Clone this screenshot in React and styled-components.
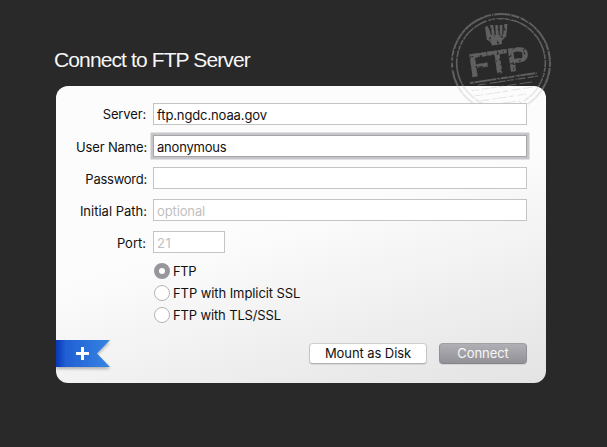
import React, { useState } from "react";
import styled, { createGlobalStyle } from "styled-components";

const GlobalStyle = createGlobalStyle`
  * { box-sizing: border-box; }
  body { margin: 0; background: #292929; }
`;

const Window = styled.main`
  width: 607px;
  height: 447px;
  overflow: hidden;
  padding: 46px 61px 0 56px;
  background: #292929;
  font-family: Inter, sans-serif;
  font-size: 13px;
  color: #111;
`;

const Title = styled.h1`
  margin: 0 0 12px -2px;
  height: 28px;
  font: 400 21px/28px "Liberation Sans", Arial, sans-serif;
  letter-spacing: -0.88px;
  white-space: nowrap;
  color: #f7f7f7;
`;

const Panel = styled.form`
  position: relative;
  display: flex;
  flex-direction: column;
  width: 490px;
  height: 297px;
  padding-top: 17px;
  border-radius: 12px;
  background: linear-gradient(164deg, #fcfcfc 0%, #fcfcfc 46%, #e3e3e3 100%);
`;

const Stamp = styled.svg`
  position: absolute;
  left: 390px;
  top: -77px;
  width: 112px;
  height: 110px;
  overflow: visible;
  pointer-events: none;
`;

const Fields = styled.div`
  position: relative;
  display: grid;
  gap: 10px;
`;

const Row = styled.label`
  display: grid;
  grid-template-columns: 91px auto;
  column-gap: 6px;
  height: 22px;
`;

const Label = styled.span`
  text-align: right;
  line-height: ${(p) => p.$lineHeight || 25}px;
  letter-spacing: ${(p) => p.$spacing || "-0.15px"};
  white-space: nowrap;
  padding-right: ${(p) => p.$inset || 0}px;
`;

const Input = styled.input`
  width: ${(p) => (p.$short ? 72 : 374)}px;
  height: 22px;
  padding: 2px 3px 0;
  border: 1px solid ${(p) => (p.$active ? "#a5a5a8" : "#c4c4c4")};
  border-radius: 0;
  outline: none;
  background: #fff;
  color: #111;
  font: 13px Inter, sans-serif;
  letter-spacing: ${(p) => p.$spacing || "-0.12px"};
  box-shadow: ${(p) => (p.$active ? "0 0 0 2.5px #c6c6ca" : "none")};
  &::placeholder { color: #bfbfbf; opacity: 1; }
`;

const Protocols = styled.div`
  display: grid;
  gap: 6px;
  margin: 10px 0 0 98px;
`;

const Choice = styled.label`
  display: flex;
  align-items: center;
  gap: 3px;
  height: 16px;
  line-height: 16px;
  white-space: nowrap;
  letter-spacing: ${(p) => p.$spacing};
`;

const Radio = styled.input`
  appearance: none;
  width: 16px;
  height: 16px;
  margin: 0;
  border: 1px solid #b5b5b5;
  border-radius: 50%;
  background: #fff;
  &:checked {
    border: 5px solid #97969c;
  }
`;

const Footer = styled.footer`
  display: flex;
  align-items: flex-start;
  margin-top: 17px;
`;

const AddButton = styled.button`
  width: 54px;
  height: 27px;
  margin-right: 199px;
  padding: 0;
  border: 0;
  background: none;
  svg { display: block; overflow: visible; }
`;

const Button = styled.button`
  width: ${(p) => p.$width}px;
  height: 21px;
  margin: 3px 12px 0 0;
  padding: 0 0 1px;
  border: 1px solid;
  border-color: ${(p) => (p.$primary ? "#a09fa4 #929196 #858489" : "#cecece #c5c5c5 #b2b2b2")};
  border-radius: 4px;
  background: ${(p) => (p.$primary ? "linear-gradient(#b0afb5, #929197)" : "#fff")};
  color: ${(p) => (p.$primary ? "#f7f7f7" : "#111")};
  font: 13px/18px Inter, sans-serif;
  letter-spacing: -0.08px;
  white-space: nowrap;
  box-shadow: 0 1px 1px rgba(0, 0, 0, 0.09);
`;

function StampArt() {
  return (
    <>
      <g fill="none" stroke="currentColor">
        <circle cx="55" cy="54" r="49" strokeWidth="2" strokeDasharray="34 1 16 1 44 2 5 2 3 1 60 1 28 1 9 1" transform="rotate(60 55 54)" />
        <circle cx="55" cy="54" r="44.3" strokeWidth="1.6" strokeDasharray="28 1 12 1 5 1 30 2 7 1 41 1" transform="rotate(150 55 54)" />
        <path d="M24 74 91 64" strokeWidth="1.8" strokeDasharray="30 1 14 1 20 1" />
        <path d="M32 76 92 67" strokeWidth="1.1" strokeDasharray="10 2 16 1 7 2" />
        <path d="M24 82 86 73M28 87l59-9M34 92l46-7M43 96l31-4" strokeWidth="1.1" strokeDasharray="9 3 15 2 5 4" />
      </g>
      <text
        transform="translate(24.5 68.2) rotate(-8)"
        fontFamily="Liberation Sans, Arial, sans-serif"
        fontSize="33"
        fontWeight="700"
        textLength="61"
        fill="currentColor"
        stroke="currentColor"
        strokeWidth="0.4"
      >
        FTP
      </text>
      <path
        fill="currentColor"
        d="M39 18l3-1 3 9h1l-1.9-10h3l1.8 10h1l-.7-10h2.8l.6 10h1l.1-10h2.8l-.3 10h1l1.2-11h3l-1 12-4.6 4.8.2 3.2-10 1.6-1.5-3.6-3.7-2.2z"
      />
    </>
  );
}

const FIELDS = [
  { label: "Server:", value: "ftp.ngdc.noaa.gov", inset: 1, lineHeight: 23 },
  { label: "User Name:", value: "anonymous", active: true, valueSpacing: "-0.2px" },
  { label: "Password:", value: "", spacing: "-0.25px" },
  { label: "Initial Path:", value: "", placeholder: "optional", spacing: "0px" },
  { label: "Port:", value: "", placeholder: "21", short: true, inset: 1, spacing: "0px", valueSpacing: "0.5px" },
];

const PROTOCOLS = [
  { label: "FTP", spacing: "-0.35px" },
  { label: "FTP with Implicit SSL", spacing: "-0.08px" },
  { label: "FTP with TLS/SSL", spacing: "-0.14px" },
];

export default function App() {
  const [protocol, setProtocol] = useState("FTP");
  return (
    <Window>
      <GlobalStyle />
      <Title>Connect to FTP Server</Title>
      <Panel onSubmit={(e) => e.preventDefault()}>
        <Stamp viewBox="0 0 112 110" aria-hidden="true">
          <defs>
            <clipPath id="aboveCard"><path d="M0 0h112v110h-12V89a12 12 0 0 0-12-12H0z" /></clipPath>
            <clipPath id="onCard"><path d="M0 77h88a12 12 0 0 1 12 12v21H0z" /></clipPath>
            <filter id="wear" x="-5%" y="-5%" width="110%" height="110%">
              <feTurbulence type="fractalNoise" baseFrequency="0.3" numOctaves="2" seed="8" result="grain" />
              <feColorMatrix in="grain" values="0 0 0 0 0  0 0 0 0 0  0 0 0 0 0  0 0 0 6 -1.35" result="mask" />
              <feComposite in="SourceGraphic" in2="mask" operator="in" />
            </filter>
          </defs>
          <g clipPath="url(#aboveCard)" color="#606060"><g filter="url(#wear)"><StampArt /></g></g>
          <g clipPath="url(#onCard)" color="#e6e6e6"><g filter="url(#wear)"><StampArt /></g></g>
        </Stamp>
        <Fields>
          {FIELDS.map((f) => (
            <Row key={f.label}>
              <Label $inset={f.inset} $lineHeight={f.lineHeight} $spacing={f.spacing}>{f.label}</Label>
              <Input
                defaultValue={f.value}
                placeholder={f.placeholder}
                $active={f.active}
                $short={f.short}
                $spacing={f.valueSpacing}
              />
            </Row>
          ))}
        </Fields>
        <Protocols>
          {PROTOCOLS.map((p) => (
            <Choice key={p.label} $spacing={p.spacing}>
              <Radio type="radio" name="protocol" checked={protocol === p.label} onChange={() => setProtocol(p.label)} />
              {p.label}
            </Choice>
          ))}
        </Protocols>
        <Footer>
          <AddButton type="button" aria-label="Add">
            <svg width="54" height="27" viewBox="0 0 54 27">
              <defs>
                <linearGradient id="ribbon" x2="1" y2="0">
                  <stop offset="0" stopColor="#0736b4" />
                  <stop offset="0.18" stopColor="#215fd4" />
                  <stop offset="1" stopColor="#3684e2" />
                </linearGradient>
                <filter id="ribbonShadow" x="-5%" y="-10%" width="115%" height="145%">
                  <feDropShadow dx="0" dy="2" stdDeviation="1.5" floodOpacity="0.28" />
                </filter>
                <clipPath id="ribbonEdge"><path d="M0 0h64v36H0z" /></clipPath>
              </defs>
              <g clipPath="url(#ribbonEdge)">
                <path d="M0 0h54L41 13.5 54 27H0z" fill="url(#ribbon)" filter="url(#ribbonShadow)" />
              </g>
              <path d="M20 13.5h13M26.5 7v13" stroke="#fff" strokeWidth="3" />
            </svg>
          </AddButton>
          <Button type="button" $width={118}>Mount as Disk</Button>
          <Button type="submit" $width={88} $primary>Connect</Button>
        </Footer>
      </Panel>
    </Window>
  );
}
